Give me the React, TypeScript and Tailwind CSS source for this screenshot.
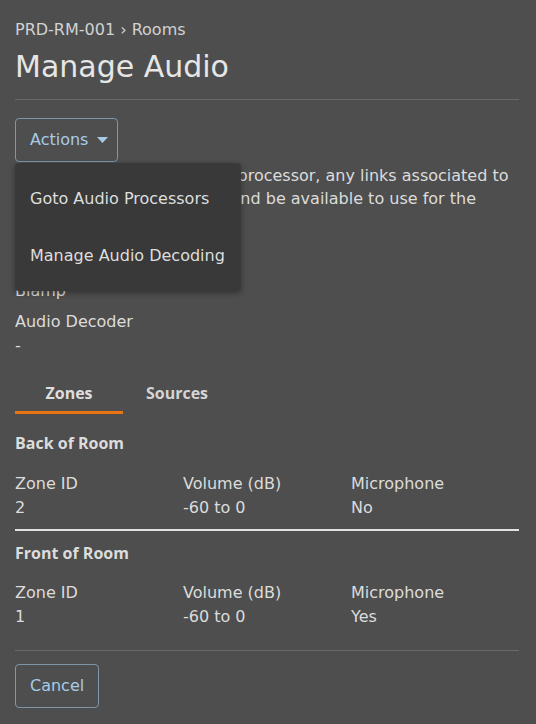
import React, { useState } from 'react';

const FONT = { fontFamily: '"DejaVu Sans", "Liberation Sans", sans-serif' };
const BOLD = { fontFamily: '"Open Sans", "Liberation Sans", sans-serif' };

const ZONES = [
  { name: 'Back of Room', id: '2', volume: '-60 to 0', mic: 'No' },
  { name: 'Front of Room', id: '1', volume: '-60 to 0', mic: 'Yes' },
];

function Field({ label, value }: { label: string; value: string }) {
  return (
    <div>
      <p className="leading-[24px]">{label}</p>
      <p className="leading-[24px]">{value}</p>
    </div>
  );
}

export default function App() {
  const [tab, setTab] = useState<'zones' | 'sources'>('zones');
  const [open, setOpen] = useState(true);

  return (
    <div style={FONT} className="min-h-[724px] w-full bg-[#4e4e4e] pl-[15px] pr-[17px] pt-[19px] pb-4 text-[16px] text-[#dcdcdc]">
      <p className="text-[16px] leading-[22px] text-[#d2d2d2]">PRD-RM-001 › Rooms</p>
      <h1 className="mt-[8px] text-[30px] leading-[36px] font-normal text-[#e6e6e6]">Manage Audio</h1>
      <div className="mt-[14px] border-t border-[#696969]" />

      <div className="relative mt-[18px]">
        <button onClick={() => setOpen(!open)}
          className="flex h-[44px] w-[103px] items-center gap-[9px] rounded-[4px] border border-[#7f96a8] pl-[14px] text-[#a7cbe6]">
          Actions
          <svg width="11" height="6" viewBox="0 0 11 6"><path d="M0 0h11L5.5 6z" fill="#a7cbe6" /></svg>
        </button>

        {open && (
          <div className="absolute left-0 top-[45px] z-10 w-[226px] rounded-[4px] bg-[#393939] py-[7px] shadow-[0_2px_6px_rgba(0,0,0,0.35)]">
            <div className="flex h-[57px] items-center whitespace-nowrap px-[15px] text-[#dedede]">Goto Audio Processors</div>
            <div className="flex h-[57px] items-center whitespace-nowrap px-[15px] text-[#dedede]">Manage Audio Decoding</div>
          </div>
        )}

        <p className="mt-[2px] whitespace-nowrap leading-[23px]">
          If you disconnect the audio processor, any links associated to<br />
          the zones will be removed and be available to use for the<br />
          new processor.
        </p>

        <div className="mt-[22px] flex flex-col gap-[7px]">
          <Field label="Audio Processor" value="Biamp" />
          <Field label="Audio Decoder" value="-" />
        </div>
      </div>

      <div style={BOLD} className="mt-[18px] flex">
        <button onClick={() => setTab('zones')}
          className={`w-[108px] border-b-[3px] pt-[6px] pb-[7px] text-[16px] leading-[22px] font-bold ${tab === 'zones' ? 'border-[#e87511] text-[#dedede]' : 'border-transparent text-[#d4d4d4]'}`}>
          Zones
        </button>
        <button onClick={() => setTab('sources')}
          className={`w-[108px] border-b-[3px] pt-[6px] pb-[7px] text-[16px] leading-[22px] font-bold ${tab === 'sources' ? 'border-[#e87511] text-[#dedede]' : 'border-transparent text-[#d4d4d4]'}`}>
          Sources
        </button>
      </div>

      <div>
        {ZONES.map((z, i) => (
          <div key={z.name} className={i < ZONES.length - 1 ? 'border-b-2 border-[#e2e2e2] pb-[9px]' : 'pb-[21px]'}>
            <h3 style={BOLD} className={`${i === 0 ? 'mt-[18px]' : 'mt-[11px]'} text-[16px] leading-[22px] font-bold`}>{z.name}</h3>
            <div className={`${i === 0 ? 'mt-[18px]' : 'mt-[17px]'} grid grid-cols-3`}>
              <Field label="Zone ID" value={z.id} />
              <Field label="Volume (dB)" value={z.volume} />
              <Field label="Microphone" value={z.mic} />
            </div>
          </div>
        ))}
      </div>

      <div className="border-t border-[#696969]" />
      <button className="mt-[13px] h-[44px] rounded-[4px] border border-[#7f96a8] px-[14px] text-[#a7cbe6]">
        Cancel
      </button>
    </div>
  );
}
